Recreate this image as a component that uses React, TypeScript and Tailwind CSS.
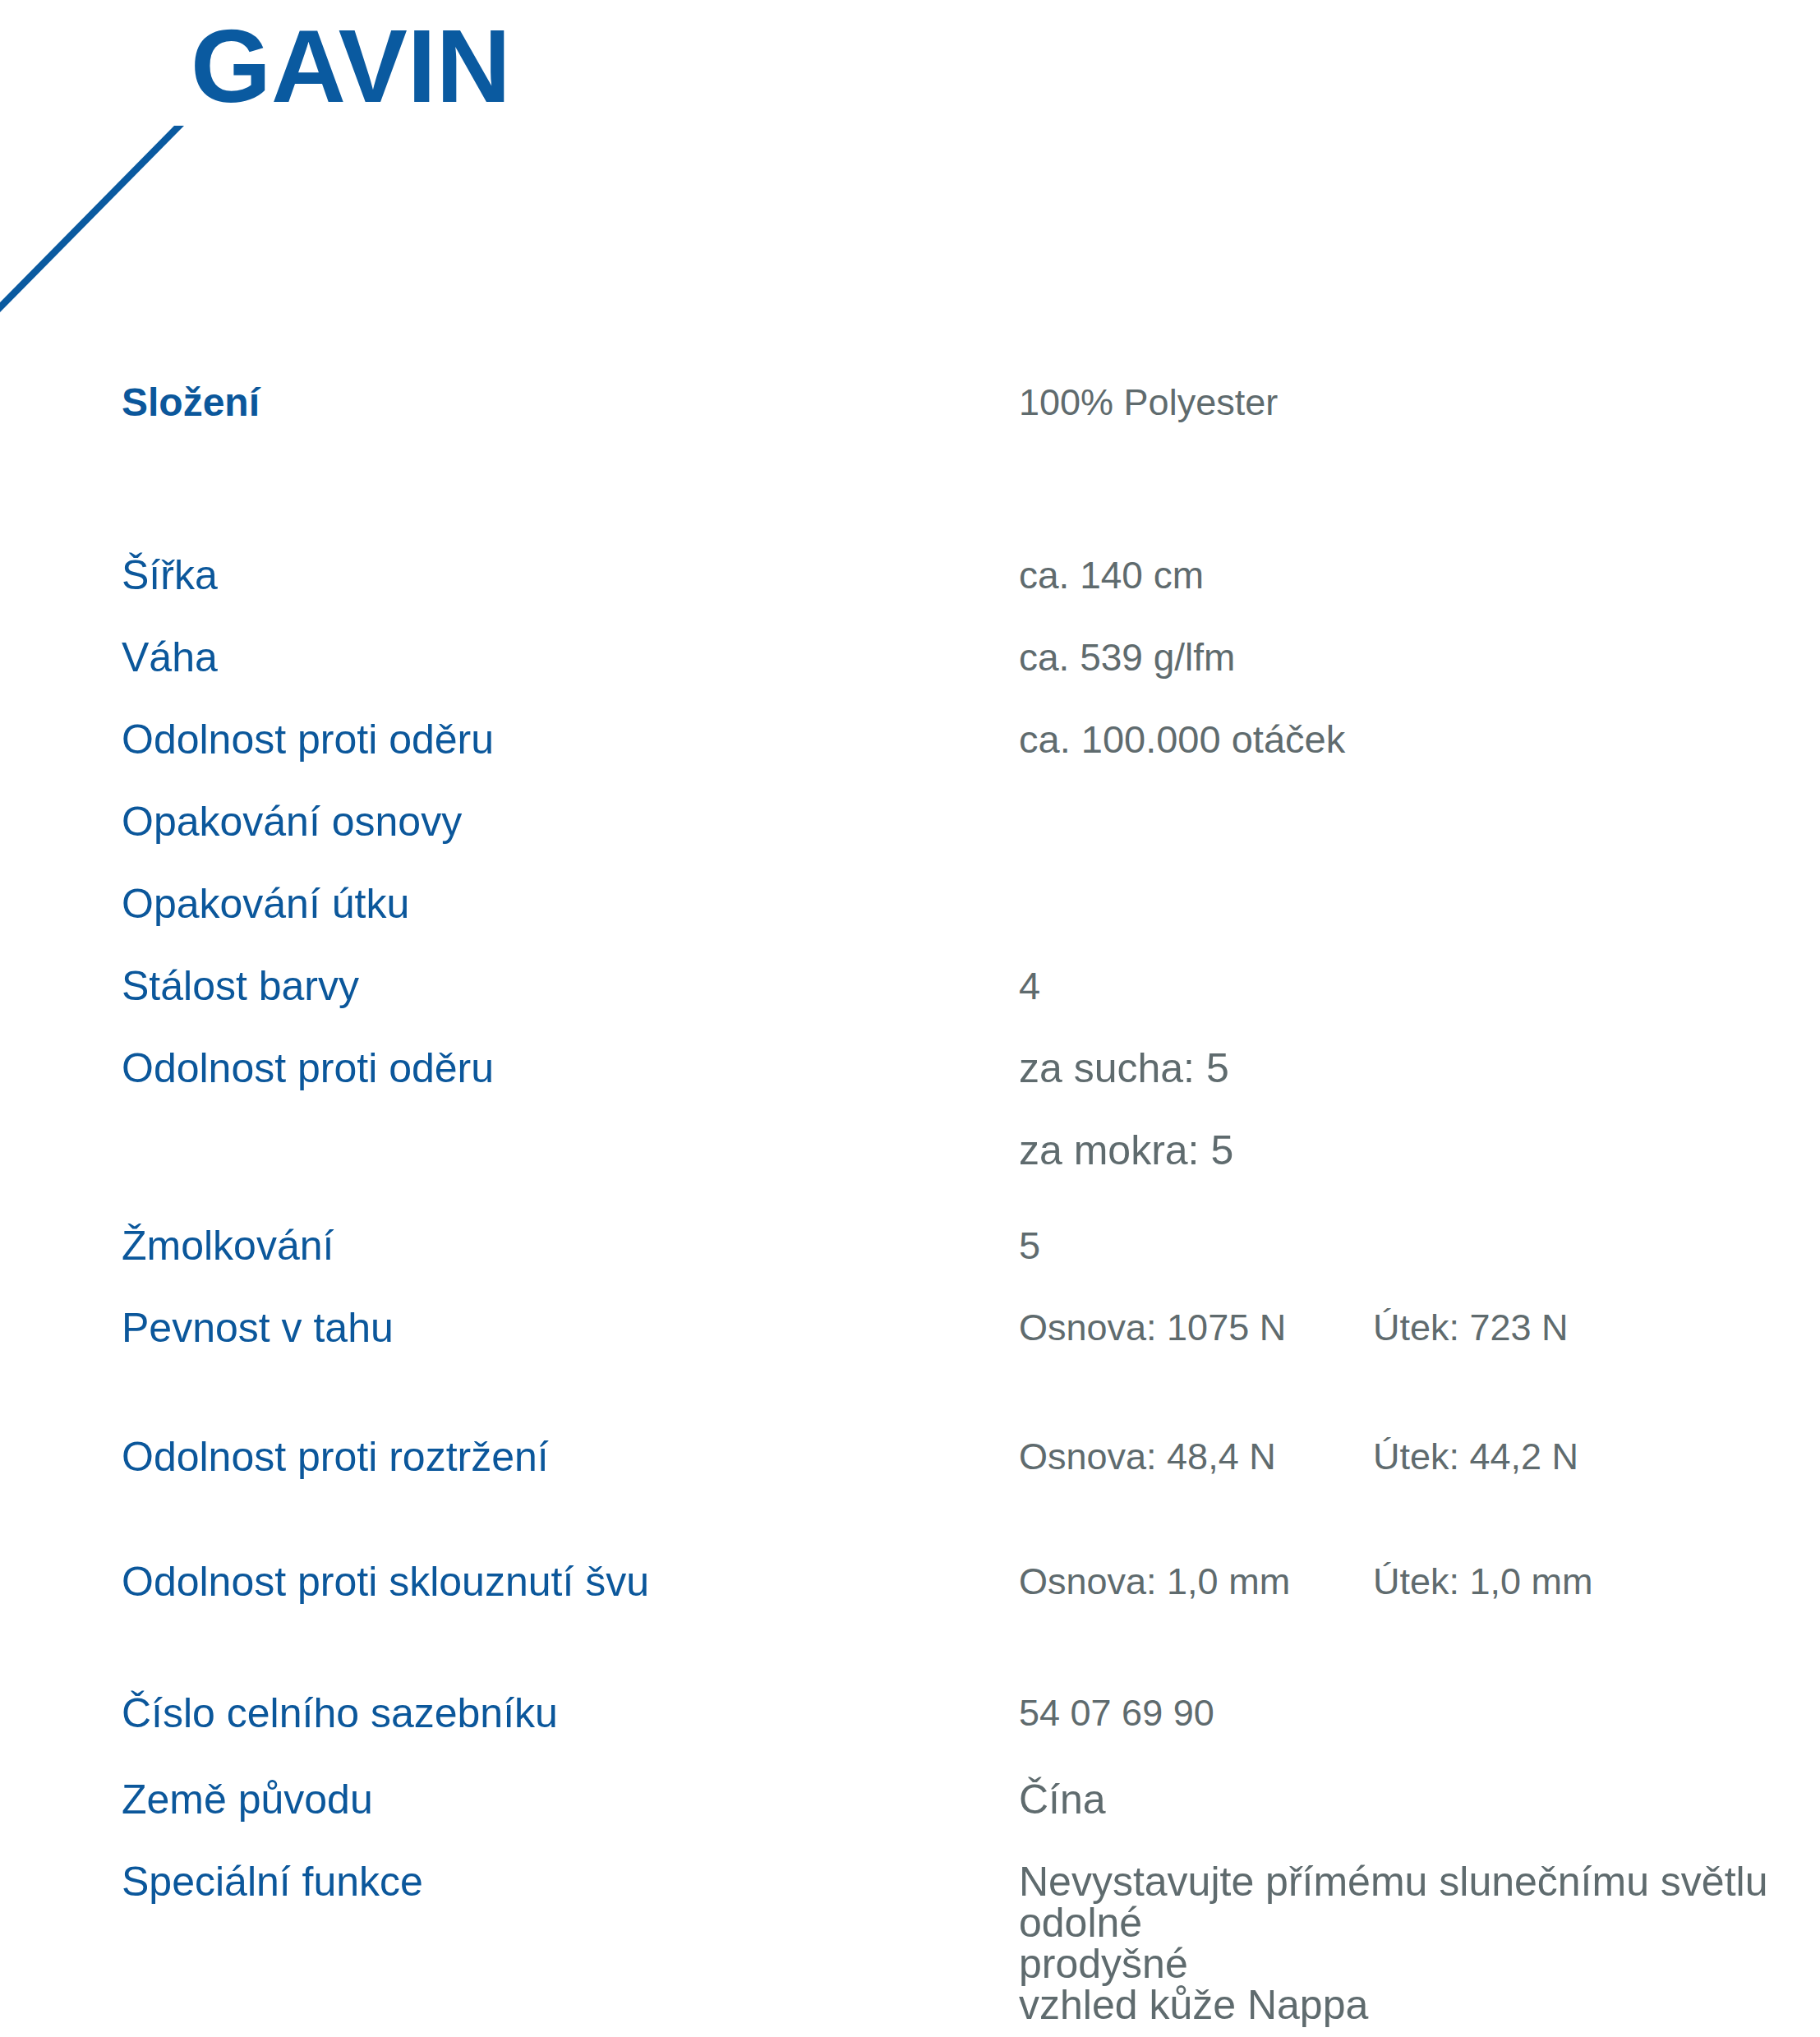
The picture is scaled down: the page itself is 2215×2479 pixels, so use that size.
type Row = {
  label: string
  bold?: boolean
  values: string[][]
  gap: string
  size: string
}

const rows: Row[] = [
  { label: "Složení", bold: true, values: [["100% Polyester"]], gap: "mt-0", size: "text-[45px]" },
  { label: "Šířka", values: [["ca. 140 cm"]], gap: "mt-[110px]", size: "text-[46px]" },
  { label: "Váha", values: [["ca. 539 g/lfm"]], gap: "mt-0", size: "text-[46px]" },
  { label: "Odolnost proti oděru", values: [["ca. 100.000 otáček"]], gap: "mt-0", size: "text-[47px]" },
  { label: "Opakování osnovy", values: [[""]], gap: "mt-0", size: "text-[46px]" },
  { label: "Opakování útku", values: [[""]], gap: "mt-0", size: "text-[46px]" },
  { label: "Stálost barvy", values: [["4"]], gap: "mt-0", size: "text-[47px]" },
  { label: "Odolnost proti oděru", values: [["za sucha: 5"], ["za mokra: 5"]], gap: "mt-0", size: "text-[50px]" },
  { label: "Žmolkování", values: [["5"]], gap: "mt-[16px]", size: "text-[47px]" },
  { label: "Pevnost v tahu", values: [["Osnova: 1075 N", "Útek: 723 N"]], gap: "mt-0", size: "text-[45px]" },
  { label: "Odolnost proti roztržení", values: [["Osnova: 48,4 N", "Útek: 44,2 N"]], gap: "mt-[57px]", size: "text-[45px]" },
  { label: "Odolnost proti sklouznutí švu", values: [["Osnova: 1,0 mm", "Útek: 1,0 mm"]], gap: "mt-[52px]", size: "text-[45px]" },
  { label: "Číslo celního sazebníku", values: [["54 07 69 90"]], gap: "mt-[60px]", size: "text-[45px]" },
  { label: "Země původu", values: [["Čína"]], gap: "mt-[5px]", size: "text-[50px]" },
]

const special = ["Nevystavujte přímému slunečnímu světlu", "odolné", "prodyšné", "vzhled kůže Nappa"]

const Header = () => (
  <div className="relative h-[440px]">
    <svg className="absolute left-0 top-0" width="240" height="400" viewBox="0 0 240 400">
      <polygon points="212,153 224,153 0,380 0,368" fill="#0a5aa0" />
    </svg>
    <h1 className="pl-[232px] pt-[18px] text-[126px] leading-none font-bold text-[#0a5aa0]">GAVIN</h1>
  </div>
)

export default function App() {
  return (
    <div className="min-h-[2479px] w-[2215px] bg-white font-['Liberation_Sans',Arial,sans-serif]">
      <Header />

      {/* Properties */}
      <div className="pl-[148px]">
        {rows.map((row, i) => (
          <div key={i} className={`grid grid-cols-[1092px_1fr] ${row.gap}`}>
            <div className={`leading-[100px] text-[#0b579b] ${row.bold ? "font-bold text-[48px]" : "text-[50px]"}`}>
              {row.label}
            </div>
            <div className={`${row.size} leading-[100px] text-[#5f6b6e]`}>
              {row.values.map((line, j) => (
                <div key={j} className="flex h-[100px]">
                  {line.map((v, k) => (
                    <span key={k} className={k === 0 && line.length > 1 ? "w-[431px]" : ""}>{v}</span>
                  ))}
                </div>
              ))}
            </div>
          </div>
        ))}

        {/* Special features */}
        <div className="grid grid-cols-[1092px_1fr]">
          <div className="text-[50px] leading-[100px] text-[#0b579b]">Speciální funkce</div>
          <div className="pt-[25px] text-[50px] leading-[50px] text-[#5f6b6e]">
            {special.map((s) => (
              <div key={s}>{s}</div>
            ))}
          </div>
        </div>
      </div>
    </div>
  )
}
